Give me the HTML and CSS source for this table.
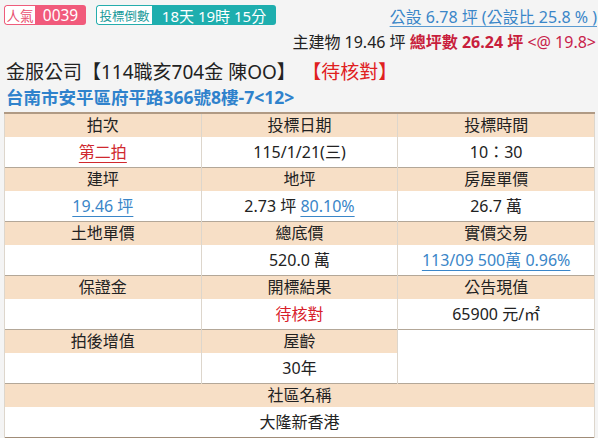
FILE: index.html
```html
<!DOCTYPE html>
<html lang="zh-Hant">
<head>
<meta charset="utf-8">
<link rel="stylesheet" href="styles.css">
</head>
<body>
<div class="page">
  <div class="top-row">
    <div class="badges">
      <span class="badge badge-pink"><span class="badge-label">人氣</span><span class="badge-value">0039</span></span>
      <span class="badge badge-teal"><span class="badge-label">投標倒數</span><span class="badge-value">18天 19時 15分</span></span>
    </div>
    <a class="public-area">公設 6.78 坪 (公設比 25.8 % )</a>
  </div>
  <div class="area-row">主建物 19.46 坪 <b class="total">總坪數 26.24 坪</b> <span class="unit">&lt;@ 19.8&gt;</span></div>
  <div class="title">金服公司【114職亥704金 陳OO】<span class="status">【待核對】</span></div>
  <div class="address">台南市安平區府平路366號8樓-7&lt;12&gt;</div>
  <table class="info">
    <tr class="hd"><td>拍次</td><td>投標日期</td><td>投標時間</td></tr>
    <tr class="vl"><td><a class="red-link">第二拍</a></td><td>115/1/21(三)</td><td>10：30</td></tr>
    <tr class="hd"><td>建坪</td><td>地坪</td><td>房屋單價</td></tr>
    <tr class="vl"><td><a class="blue-link">19.46 坪</a></td><td>2.73 坪 <a class="blue-link">80.10%</a></td><td>26.7 萬</td></tr>
    <tr class="hd"><td>土地單價</td><td>總底價</td><td>實價交易</td></tr>
    <tr class="vl"><td></td><td>520.0 萬</td><td><a class="blue-link">113/09 500萬 0.96%</a></td></tr>
    <tr class="hd"><td>保證金</td><td>開標結果</td><td>公告現值</td></tr>
    <tr class="vl"><td></td><td class="red">待核對</td><td>65900 元/㎡</td></tr>
    <tr class="hd"><td>拍後增值</td><td>屋齡</td><td class="blank" rowspan="2"></td></tr>
    <tr class="vl"><td></td><td>30年</td></tr>
    <tr class="hd"><td colspan="3">社區名稱</td></tr>
    <tr class="vl"><td colspan="3">大隆新香港</td></tr>
  </table>
</div>
</body>
</html>
```
FILE: styles.css
```css
html, body {
  margin: 0;
  padding: 0;
}
body {
  background: #f4f4f4;
  font-family: "Noto Sans", "Noto Sans CJK TC", sans-serif;
  color: #222;
  width: 598px;
  height: 438px;
  overflow: hidden;
}
.page {
  padding: 5px 0 0 4px;
}
.top-row {
  display: flex;
  justify-content: space-between;
  align-items: flex-start;
  height: 21px;
}
.badges {
  display: flex;
  gap: 10px;
  flex: none;
}
.badge {
  display: flex;
  height: 20px;
  border-radius: 3px;
  overflow: hidden;
  white-space: nowrap;
  flex: none;
}
.badge-label {
  box-sizing: border-box;
  background: #fff;
  display: flex;
  align-items: center;
  justify-content: center;
  font-size: 13.5px;
  border: 1px solid;
  border-right: none;
  border-radius: 3px 0 0 3px;
}
.badge-value {
  box-sizing: border-box;
  display: flex;
  align-items: center;
  justify-content: center;
  color: #fff;
}
.badge-pink .badge-label {
  color: #e8506f;
  border-color: #ee5c7b;
  width: 31px;
}
.badge-pink .badge-value {
  background: #f15a7b;
  font-size: 15.5px;
  width: 51px;
}
.badge-teal .badge-label {
  color: #1a9a9a;
  border-color: #25adad;
  font-size: 12.5px;
  width: 56px;
}
.badge-teal .badge-value {
  background: #1eaeae;
  font-size: 15px;
  width: 124px;
}
.public-area {
  color: #3a86c8;
  font-size: 16px;
  line-height: 20px;
  text-decoration: underline;
  text-decoration-color: #5a9ad0;
  text-underline-offset: 3px;
  white-space: nowrap;
  margin-right: 1px;
  margin-top: 2px;
}
.area-row {
  text-align: right;
  white-space: nowrap;
  font-size: 16px;
  line-height: 20px;
  margin-top: 6px;
  margin-right: 2px;
  color: #222;
}
.area-row .total {
  color: #c81e3c;
}
.area-row .unit {
  color: #c8224a;
}
.title {
  font-size: 19px;
  line-height: 24px;
  margin-top: 8px;
  padding-left: 2px;
  color: #222;
  white-space: nowrap;
}
.title .status {
  color: #e0201e;
  margin-left: 16px;
}
.address {
  font-size: 17.5px;
  font-weight: bold;
  color: #2f82cc;
  line-height: 22px;
  margin-top: 2px;
  padding-left: 2px;
  white-space: nowrap;
}
.info {
  margin-top: 4px;
  width: 591px;
  border-collapse: collapse;
  table-layout: fixed;
  font-size: 16px;
  background: #fff;
  border: 1px solid #a08c78;
  border-top: 2px solid #b09a84;
}
.info td {
  text-align: center;
  padding: 0;
  border-left: 1px solid #ddd6cc;
  border-right: 1px solid #ddd6cc;
  width: 33.33%;
}
.info tr.hd td {
  background: #f7dfc6;
  height: 23px;
  line-height: 23px;
  border-top: 1px solid #b3a798;
}
.info tr.hd td.blank {
  background: #fff;
}
.info tr.vl td {
  height: 30px;
  line-height: 30px;
}
.red-link {
  color: #d0282e;
  text-decoration: underline;
  text-underline-offset: 4px;
}
.blue-link {
  color: #3a86c8;
  text-decoration: underline;
  text-underline-offset: 4px;
}
.red {
  color: #d8202a;
}
```
